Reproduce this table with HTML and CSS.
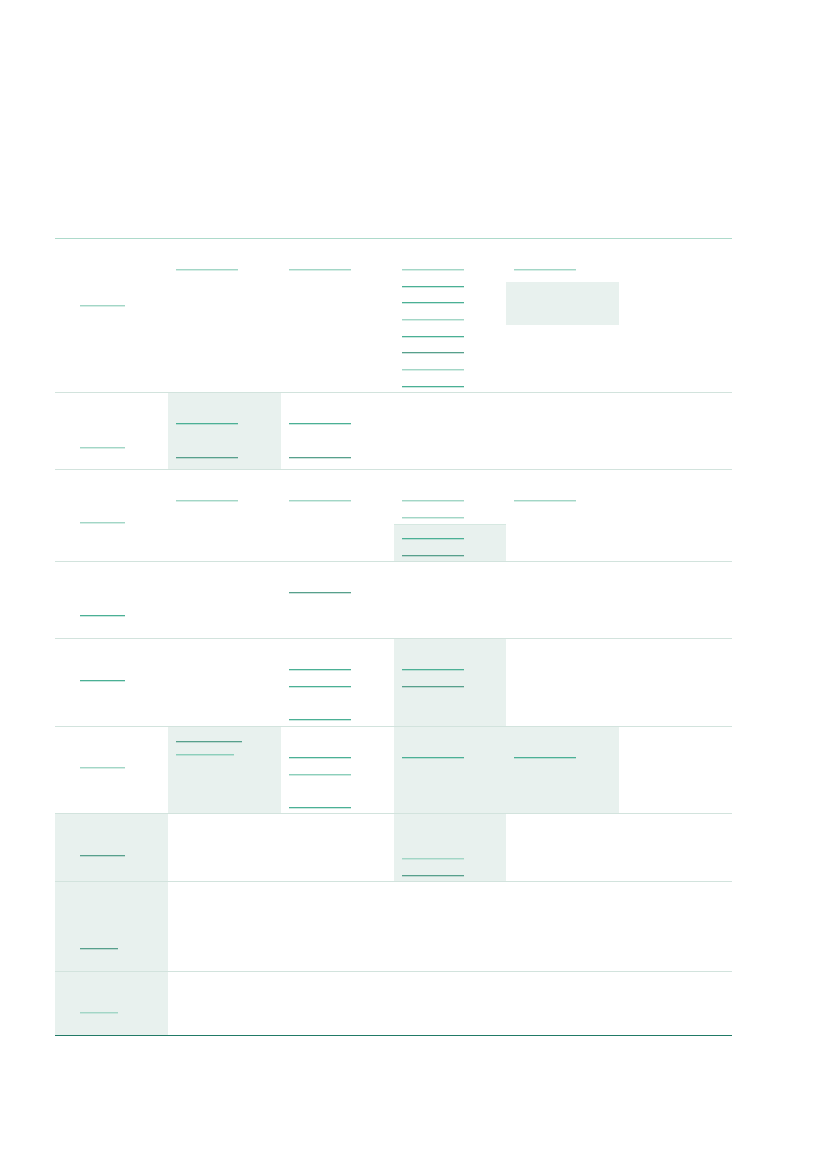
FILE: index.html
```html
<!DOCTYPE html>
<html lang="en">
<head>
<meta charset="utf-8">
<title>Table</title>
<link rel="stylesheet" href="styles.css">
</head>
<body>
<div class="table">
  <div class="row first r1">
    <div class="cell c1 p50"><a class="l w45 lt">Item</a></div>
    <div class="cell p14"><a class="l lt">Reference</a></div>
    <div class="cell p14"><a class="l lt">Reference</a></div>
    <div class="cell p14">
      <a class="l lt">Source one</a>
      <a class="l br">Source two</a>
      <a class="l br">Source three</a>
      <a class="l lt">Source four</a>
      <a class="l br">Source five</a>
      <a class="l dk">Source six</a>
      <a class="l lt">Source seven</a>
      <a class="l br">Source eight</a>
    </div>
    <div class="cell p14"><a class="l lt">Reference</a><div class="box b43"></div></div>
    <div class="cell"></div>
  </div>
  <div class="row r2">
    <div class="cell c1 p38"><a class="l w45 lt">Item</a></div>
    <div class="cell p14 sh"><a class="l br">Reference</a><a class="l dk gap">Reference</a></div>
    <div class="cell p14"><a class="l br">Reference</a><a class="l dk gap">Reference</a></div>
    <div class="cell"></div>
    <div class="cell"></div>
    <div class="cell"></div>
  </div>
  <div class="row r3">
    <div class="cell c1 p36"><a class="l w45 lt">Item</a></div>
    <div class="cell p14"><a class="l lt">Reference</a></div>
    <div class="cell p14"><a class="l lt">Reference</a></div>
    <div class="cell p14">
      <a class="l lt">Source one</a>
      <a class="l lt">Source two</a>
      <div class="box fill"><a class="l br h13">Source three</a><a class="l dk">Source four</a></div>
    </div>
    <div class="cell p14"><a class="l lt">Reference</a></div>
    <div class="cell"></div>
  </div>
  <div class="row r4">
    <div class="cell c1 p37"><a class="l w45 br">Item</a></div>
    <div class="cell"></div>
    <div class="cell p14"><a class="l dk">Reference</a></div>
    <div class="cell"></div>
    <div class="cell"></div>
    <div class="cell"></div>
  </div>
  <div class="row r5">
    <div class="cell c1 p25"><a class="l w45 br">Item</a></div>
    <div class="cell"></div>
    <div class="cell p14"><a class="l br">Reference</a><a class="l br">Reference</a><a class="l br gap2">Reference</a></div>
    <div class="cell p14 sh"><a class="l br">Reference</a><a class="l dk">Reference</a></div>
    <div class="cell"></div>
    <div class="cell"></div>
  </div>
  <div class="row r6">
    <div class="cell c1 p24"><a class="l w45 lt">Item</a></div>
    <div class="cell p2 sh"><a class="l sm w66 dk">Reference</a><a class="l sm w58 lm">Refer</a></div>
    <div class="cell p14"><a class="l br">Reference</a><a class="l lm">Reference</a><a class="l br gap2">Reference</a></div>
    <div class="cell p14 sh"><a class="l br">Reference</a></div>
    <div class="cell p14 sh"><a class="l br">Reference</a></div>
    <div class="cell"></div>
  </div>
  <div class="row r7">
    <div class="cell c1 p25 sh"><a class="l w45 dk">Item</a></div>
    <div class="cell"></div>
    <div class="cell"></div>
    <div class="cell p28 sh"><a class="l lt">Reference</a><a class="l dk">Reference</a></div>
    <div class="cell"></div>
    <div class="cell"></div>
  </div>
  <div class="row r8">
    <div class="cell c1 p50 sh"><a class="l w38 dk">Item</a></div>
    <div class="cell"></div>
    <div class="cell"></div>
    <div class="cell"></div>
    <div class="cell"></div>
    <div class="cell"></div>
  </div>
  <div class="row r9 last">
    <div class="cell c1 p24 sh"><a class="l w38 lt">Item</a></div>
    <div class="cell"></div>
    <div class="cell"></div>
    <div class="cell"></div>
    <div class="cell"></div>
    <div class="cell"></div>
  </div>
</div>
</body>
</html>
```

FILE: styles.css
```css
html, body {
  margin: 0;
  padding: 0;
  background: #ffffff;
  font-family: "Liberation Sans", Arial, sans-serif;
}

.table {
  width: 677px;
  margin: 238px 0 0 55px;
}

.row {
  display: grid;
  grid-template-columns: repeat(6, 1fr);
  box-sizing: border-box;
  border-top: 1px solid #d2e3dd;
}

.row.first { border-top-color: #addacb; }
.row.last { border-bottom: 1px solid #217a66; }

.r1 { height: 154px; }
.r2 { height: 77px; }
.r3 { height: 92px; }
.r4 { height: 77px; }
.r5 { height: 88px; }
.r6 { height: 87px; }
.r7 { height: 68px; }
.r8 { height: 90px; }
.r9 { height: 65px; }

.cell {
  box-sizing: border-box;
  min-width: 0;
  display: flex;
  flex-direction: column;
}

.sh { background: #e8f1ee; }

.p2 { padding-top: 2px; }
.p14 { padding-top: 14.3px; }
.p24 { padding-top: 24.3px; }
.p25 { padding-top: 25.3px; }
.p28 { padding-top: 28.3px; }
.p36 { padding-top: 36.3px; }
.p37 { padding-top: 37.3px; }
.p38 { padding-top: 38.3px; }
.p50 { padding-top: 50.3px; }

.l {
  --c: #a6d8c8;
  --s: rgba(166, 216, 200, 0.45);
  display: block;
  flex: none;
  box-sizing: content-box;
  width: 62px;
  height: 15.7px;
  margin-left: 8px;
  border-bottom: 1px solid var(--c);
  box-shadow: 0 1px 0 var(--s);
  font-size: 9px;
  line-height: 15.7px;
  color: transparent;
  white-space: nowrap;
  overflow: hidden;
  text-decoration: none;
}

.c1 .l { margin-left: 25px; }

.w45 { width: 45px; }
.w38 { width: 38px; }
.w66 { width: 66px; }
.w58 { width: 58px; }

.sm { height: 12px; line-height: 12px; }
.h13 { height: 13.3px; }

.gap { margin-top: 17.3px; }
.gap2 { margin-top: 16.3px; }

.lt { --c: #a2d6c6; --s: rgba(162, 214, 198, 0.45); }
.lm { --c: #8ccfbb; --s: rgba(140, 207, 187, 0.45); }
.br { --c: #4bb095; --s: rgba(75, 176, 149, 0.3); }
.dk { --c: #57a08c; --s: rgba(87, 160, 140, 0.3); }

.box {
  background: #e8f1ee;
  flex: none;
}

.b43 {
  margin-top: 12px;
  height: 43px;
}

.box.fill {
  flex: 1;
  margin-top: 6px;
  border-top: 1px solid #d6e8e1;
}
```
